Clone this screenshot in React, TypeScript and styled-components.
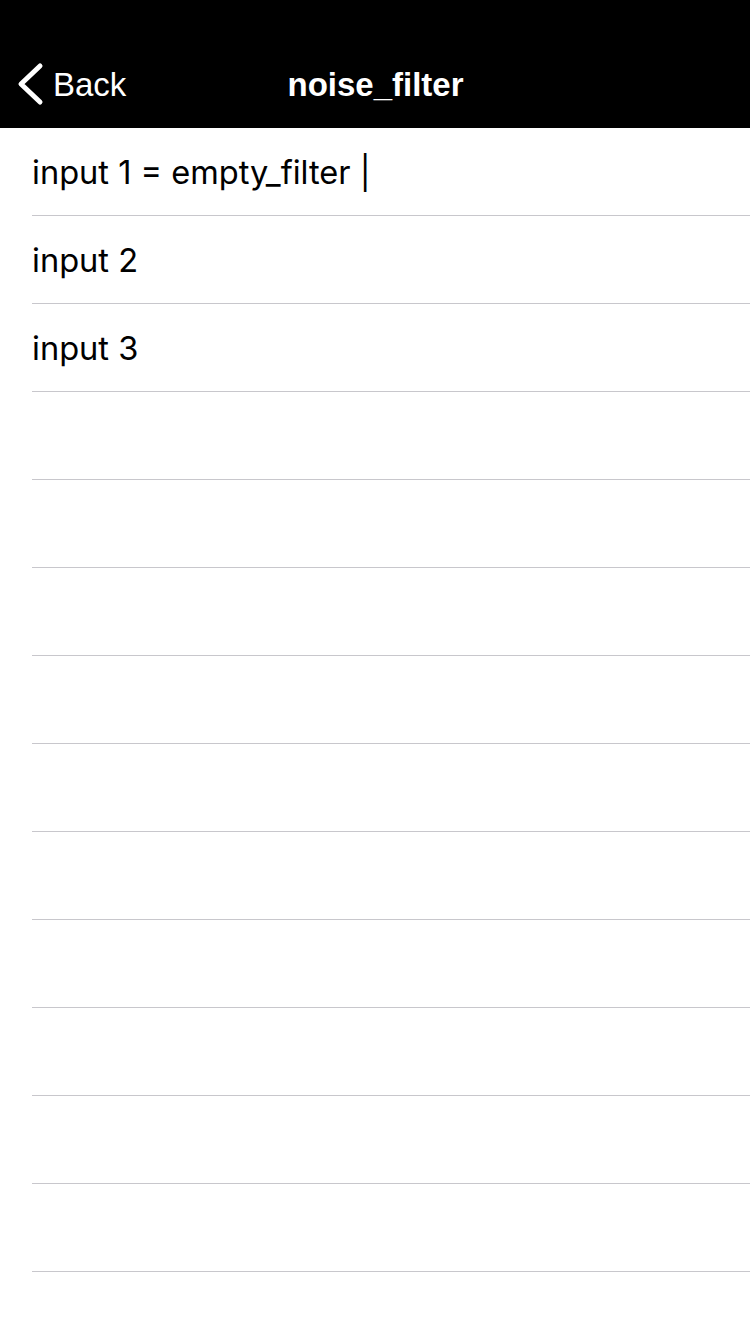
import React from "react";
import styled, { createGlobalStyle } from "styled-components";

const Global = createGlobalStyle`
  html, body { margin: 0; padding: 0; background: #ffffff; }
  body { font-family: "Liberation Sans", Arial, sans-serif; -webkit-font-smoothing: antialiased; }
`;

const Screen = styled.div`
  width: 750px;
  height: 1334px;
  overflow: hidden;
  background: #ffffff;
  display: flex;
  flex-direction: column;
`;

const NavBar = styled.header`
  height: 128px;
  background: #000000;
  box-sizing: border-box;
  padding-top: 40px;
  display: grid;
  grid-template-columns: 1fr auto 1fr;
  align-items: center;
  color: #ffffff;
`;

const BackButton = styled.div`
  display: flex;
  align-items: center;
  padding-left: 16px;
  gap: 9px;
  font-size: 33px;
  height: 88px;
`;

const BackLabel = styled.span`
  line-height: 1;
`;

const Title = styled.h1`
  margin: 0;
  font-size: 33px;
  font-weight: 700;
  line-height: 1;
  margin-left: 1px;
`;

const List = styled.div`
  display: flex;
  flex-direction: column;
`;

const Row = styled.div`
  height: 88px;
  box-sizing: border-box;
  margin-left: 32px;
  border-bottom: 1px solid #c8c7cc;
  display: flex;
  align-items: center;
  font-family: Inter, "Liberation Sans", Arial, sans-serif;
  font-size: 32.6px;
  color: #000000;
`;

const rows = ["input 1 = empty_filter |", "input 2", "input 3", "", "", "", "", "", "", "", "", "", "", ""];

export default function App() {
  return (
    <Screen>
      <Global />
      <NavBar>
        <BackButton>
          <svg width="28" height="44" viewBox="0 0 28 44">
            <polyline
              points="24,4 5,22 24,40"
              fill="none"
              stroke="#ffffff"
              strokeWidth="5"
              strokeLinecap="round"
              strokeLinejoin="round"
            />
          </svg>
          <BackLabel>Back</BackLabel>
        </BackButton>
        <Title>noise_filter</Title>
        <div />
      </NavBar>
      <List>
        {rows.map((r, i) => (
          <Row key={i}>{r}</Row>
        ))}
      </List>
    </Screen>
  );
}
